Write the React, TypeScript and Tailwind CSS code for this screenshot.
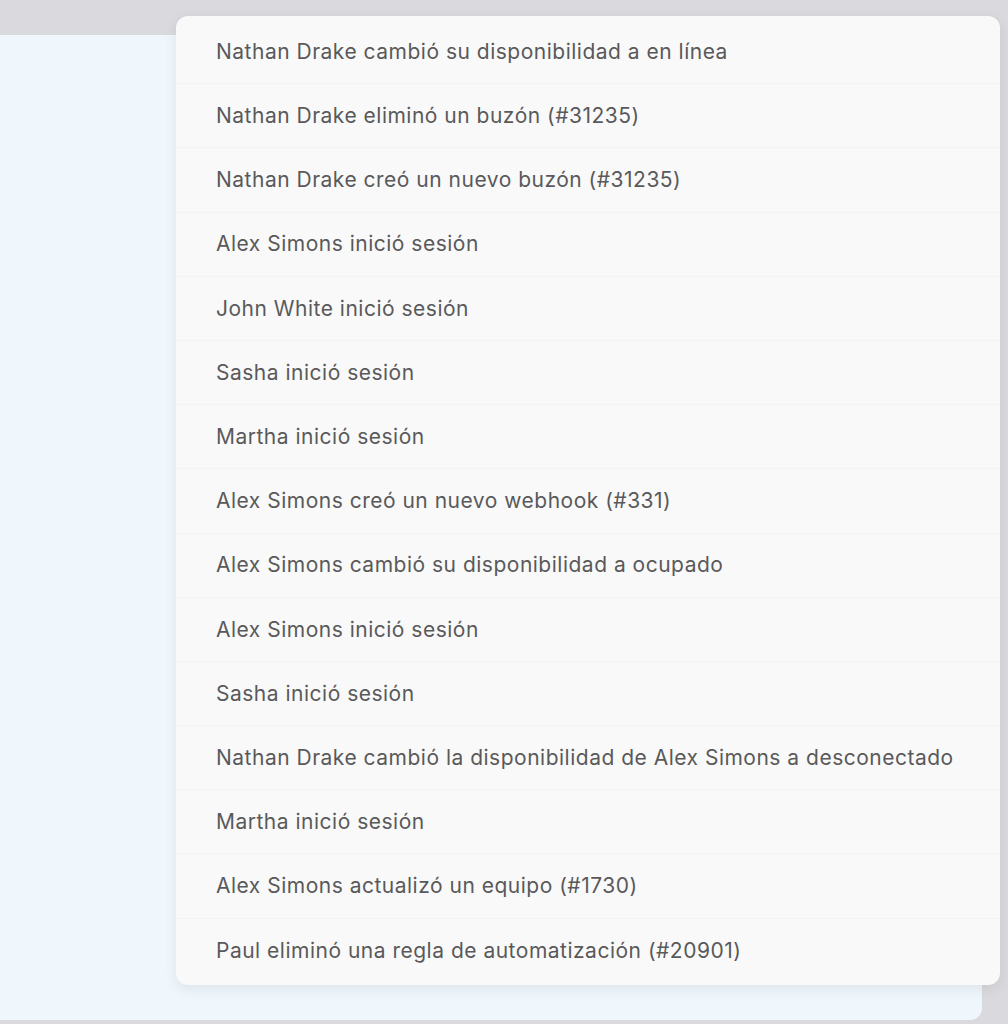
const items = [
  'Nathan Drake cambió su disponibilidad a en línea',
  'Nathan Drake eliminó un buzón (#31235)',
  'Nathan Drake creó un nuevo buzón (#31235)',
  'Alex Simons inició sesión',
  'John White inició sesión',
  'Sasha inició sesión',
  'Martha inició sesión',
  'Alex Simons creó un nuevo webhook (#331)',
  'Alex Simons cambió su disponibilidad a ocupado',
  'Alex Simons inició sesión',
  'Sasha inició sesión',
  'Nathan Drake cambió la disponibilidad de Alex Simons a desconectado',
  'Martha inició sesión',
  'Alex Simons actualizó un equipo (#1730)',
  'Paul eliminó una regla de automatización (#20901)',
]

export default function App() {
  return (
    <div className="relative h-[1024px] w-[1008px] overflow-hidden bg-[#dadade]" style={{ fontFamily: 'Inter, "Noto Sans", sans-serif' }}>
      {/* panel behind the popover */}
      <div className="absolute left-[-20px] top-[35px] h-[985px] w-[1002px] rounded-[12px] bg-[#eff6fc]" />
      {/* activity popover */}
      <div className="absolute left-[176px] top-[16px] w-[824px] rounded-[12px] bg-[#f9f9f9] pb-[2px] pt-[4px] shadow-[0_4px_14px_rgba(0,0,0,0.08)]">
        <ul className="flex flex-col">
          {items.map((t, i) => (
            <li
              key={i}
              className={`flex h-[64.2px] items-center pl-[40px] text-[21px] tracking-[0.5px] text-[#59595b] ${i < items.length - 1 ? 'border-b border-[#f4f4f4]' : ''}`}
            >
              {t}
            </li>
          ))}
        </ul>
      </div>
    </div>
  )
}
